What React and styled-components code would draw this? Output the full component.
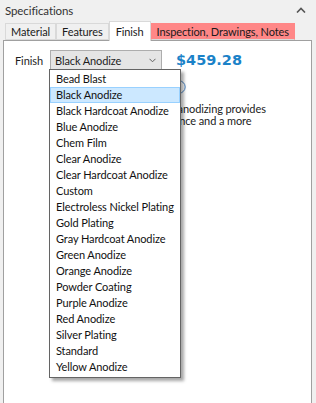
import React from 'react';
import styled, { createGlobalStyle } from 'styled-components';

const GlobalStyle = createGlobalStyle`
  html, body {
    margin: 0;
    padding: 0;
    background: #f0f0f0;
  }
  body {
    font-family: Lato, "Noto Sans", sans-serif;
    font-size: 11px;
    letter-spacing: -0.1px;
    color: #1e1e1e;
  }
`;

const Page = styled.div`
  width: 316px;
  height: 403px;
  display: flex;
  flex-direction: column;
  overflow: hidden;
  box-sizing: border-box;
  padding: 0 4px 0 3px;
`;

const HeaderBar = styled.div`
  height: 20px;
  display: flex;
  align-items: center;
  justify-content: space-between;
  padding: 0 6px 0 2px;
  font-size: 11.5px;
  color: #333;
`;

const TabStrip = styled.div`
  display: flex;
  align-items: flex-end;
  height: 20px;
  padding-left: 2px;
  position: relative;
  z-index: 1;
`;

const Tab = styled.div`
  height: ${p => (p.$active ? '20px' : '17px')};
  box-sizing: border-box;
  padding: 0 ${p => (p.$active ? '6px' : '5px')};
  display: flex;
  align-items: center;
  background: ${p => (p.$active ? '#ffffff' : p.$warn ? '#ff8787' : '#f0f0f0')};
  border: 1px solid ${p => (p.$warn ? '#ff8787' : '#d9d9d9')};
  border-bottom: ${p => (p.$active ? 'none' : '1px solid #d9d9d9')};
  margin-bottom: ${p => (p.$active ? '-1px' : '0')};
  color: #1a1a1a;
  white-space: nowrap;
`;

const Panel = styled.div`
  flex: 1;
  background: #fff;
  border: 1px solid #a0a0a0;
  border-bottom: none;
  position: relative;
  padding: 9px 0 0 11px;
`;

const FieldRow = styled.div`
  display: flex;
  align-items: center;
`;

const Label = styled.span`
  width: 35px;
`;

const SelectWrap = styled.div`
  position: relative;
  z-index: 5;
`;

const SelectBox = styled.div`
  width: 112px;
  height: 20px;
  box-sizing: border-box;
  border: 1px solid #adadad;
  background: #e5e5e5;
  display: flex;
  align-items: center;
  justify-content: space-between;
  padding: 0 5px 0 4px;
`;

const Price = styled.span`
  margin-left: 14px;
  font-family: "DejaVu Sans", Verdana, sans-serif;
  font-weight: bold;
  font-size: 14.5px;
  letter-spacing: 0;
  color: #1b82c8;
`;

const DropList = styled.ul`
  position: absolute;
  top: 19px;
  left: -1px;
  width: 132px;
  box-sizing: border-box;
  margin: 0;
  padding: 1px 0 2px;
  list-style: none;
  background: #fff;
  border: 1px solid #646464;
  box-shadow: 3px 3px 3px rgba(0, 0, 0, 0.35);
`;

const Item = styled.li`
  height: 16px;
  line-height: 14px;
  box-sizing: border-box;
  padding-left: 5px;
  border: 1px solid ${p => (p.$selected ? '#99d1ff' : 'transparent')};
  background: ${p => (p.$selected ? '#cce8ff' : 'transparent')};
  color: #111;
  white-space: nowrap;
  overflow: hidden;
`;

const OptionRow = styled.div`
  display: flex;
  align-items: center;
  margin: 9px 0 0 157px;
  height: 15px;
`;

const Description = styled.p`
  margin: 9px 0 0 42px;
  width: 222px;
  line-height: 12px;
  color: #222;
`;

const finishes = [
  'Bead Blast',
  'Black Anodize',
  'Black Hardcoat Anodize',
  'Blue Anodize',
  'Chem Film',
  'Clear Anodize',
  'Clear Hardcoat Anodize',
  'Custom',
  'Electroless Nickel Plating',
  'Gold Plating',
  'Gray Hardcoat Anodize',
  'Green Anodize',
  'Orange Anodize',
  'Powder Coating',
  'Purple Anodize',
  'Red Anodize',
  'Silver Plating',
  'Standard',
  'Yellow Anodize',
];

function ChevronUp() {
  return (
    <svg width="10" height="6" viewBox="0 0 10 6">
      <path d="M1 5.5 L5 1.5 L9 5.5" fill="none" stroke="#555" strokeWidth="1.6" />
    </svg>
  );
}

function ChevronDown() {
  return (
    <svg width="7" height="5" viewBox="0 0 7 5">
      <path d="M0.5 0.8 L3.5 3.8 L6.5 0.8" fill="none" stroke="#606060" strokeWidth="1" />
    </svg>
  );
}

function Radio() {
  return (
    <svg width="14" height="14" viewBox="0 0 14 14">
      <circle cx="7" cy="7" r="6.2" fill="#fff" stroke="#4a86c5" strokeWidth="1" />
    </svg>
  );
}

export default function App() {
  return (
    <>
      <GlobalStyle />
      <Page>
        <HeaderBar>
          <span>Specifications</span>
          <ChevronUp />
        </HeaderBar>
        <TabStrip>
          <Tab>Material</Tab>
          <Tab>Features</Tab>
          <Tab $active>Finish</Tab>
          <Tab $warn>Inspection, Drawings, Notes</Tab>
        </TabStrip>
        <Panel>
          <FieldRow>
            <Label>Finish</Label>
            <SelectWrap>
              <SelectBox>
                <span>Black Anodize</span>
                <ChevronDown />
              </SelectBox>
              <DropList>
                {finishes.map(f => (
                  <Item key={f} $selected={f === 'Black Anodize'}>{f}</Item>
                ))}
              </DropList>
            </SelectWrap>
            <Price>$459.28</Price>
          </FieldRow>
          <OptionRow>
            <Radio />
          </OptionRow>
          <Description>
            Type II sulfuric acid black anodizing provides excellent corrosion resistance and a more durable finish.
          </Description>
        </Panel>
      </Page>
    </>
  );
}
